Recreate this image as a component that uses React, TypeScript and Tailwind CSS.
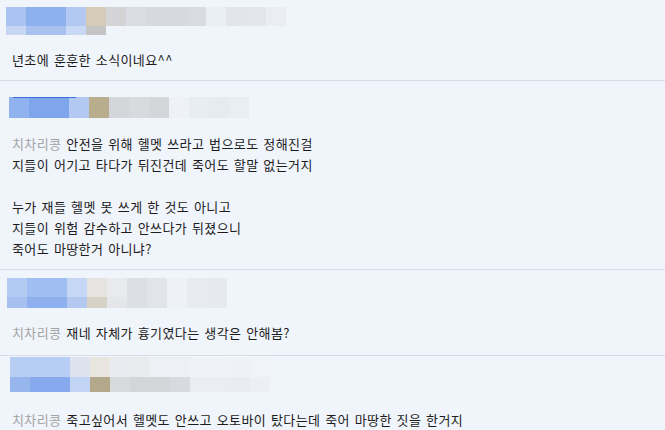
import React from "react";

type MosaicProps = {
  top: string[];
  bottom?: string[];
  topH: number;
  bottomH?: number;
  line?: boolean;
};

// pixelated (blurred-out) user name, drawn as coloured cells
const Mosaic = ({ top, bottom = [], topH, bottomH = 0, line }: MosaicProps) => {
  const w = top.length * 20;
  return (
    <svg width={w} height={topH + bottomH} className="block">
      {top.map((c, i) => (
        <rect key={"t" + i} x={i * 20} y={0} width={20} height={topH} fill={c} />
      ))}
      {bottom.map((c, i) => (
        <rect key={"b" + i} x={i * 20} y={topH} width={20} height={bottomH} fill={c} />
      ))}
      {line && <rect x={4} y={0} width={63} height={1} fill="#3a6fd8" />}
    </svg>
  );
};

const Name = () => <span className="text-[#a3a3a3]">치차리콩 </span>;

const App = () => {
  return (
    <div
      className="w-[665px] h-[430px] overflow-hidden bg-[#f0f4fb] text-[13px] leading-[21px] tracking-[0.4px] [word-spacing:1.5px] text-[#1c1c1c]"
      style={{ fontFamily: '"Noto Sans CJK KR", sans-serif' }}
    >
      <div className="pl-[6px] pr-3 pt-[7px] pb-[10px] border-b border-[#d9dee6]">
        <Mosaic
          topH={19}
          bottomH={9}
          top={["#a9c4f0", "#8eb0ee", "#8eb0ee", "#b4c9f2", "#d6cbb6", "#d4d4d6", "#dadde3", "#d6d9de", "#d6d9de", "#d8dbe0", "#eaeef5", "#e2e6ec", "#e3e7ed", "#eaedf4"]}
          bottom={["#c7d7f3", "#a8c2f0", "#a8c2f0", "#c9d8f5", "#c4c4c4"]}
        />
        <p className="mt-[14px] pl-[6px]">년초에 훈훈한 소식이네요^^</p>
      </div>

      <div className="pl-[9px] pt-[16px] pb-[10px] border-b border-[#d9dee6]">
        <Mosaic
          topH={21}
          line
          top={["#90b2ef", "#7fa5ec", "#7fa5ec", "#b4c9f2", "#b8ad8c", "#d4d6da", "#d8dade", "#d4d6da", "#eef2f8", "#e8ecf3", "#e6eaf1", "#e9edf4"]}
        />
        <div className="mt-[15px] pl-[3px]">
          <p><Name />안전을 위해 헬멧 쓰라고 법으로도 정해진걸</p>
          <p>지들이 어기고 타다가 뒤진건데 죽어도 할말 없는거지</p>
          <p>&nbsp;</p>
          <p>누가 재들 헬멧 못 쓰게 한 것도 아니고</p>
          <p>지들이 위험 감수하고 안쓰다가 뒤졌으니</p>
          <p>죽어도 마땅한거 아니냐?</p>
        </div>
      </div>

      <div className="pl-[7px] pt-[8px] pb-[12px] border-b border-[#d9dee6]">
        <Mosaic
          topH={19}
          bottomH={11}
          top={["#b2cbf2", "#9fbef2", "#9fbef2", "#c6d6f5", "#e5e4e0", "#e8eaee", "#dcdfe4", "#e1e4e9", "#eef2f8", "#e8ebf0", "#e6e9ee"]}
          bottom={["#a6c0f0", "#8eb0ee", "#8eb0ee", "#b4c9f2", "#d6d2c6", "#e4e6ea", "#dcdfe4", "#e1e4e9", "#eef2f8", "#e8ebf0", "#e6e9ee"]}
        />
        <p className="mt-[14px] pl-[5px]"><Name />재네 자체가 흉기였다는 생각은 안해봄?</p>
      </div>

      <div className="pl-[10px] pt-[1px]">
        <Mosaic
          topH={20}
          bottomH={15}
          top={["#b8cdf3", "#b8cdf3", "#b8cdf3", "#dde3ee", "#e8e6df", "#e9ebf0", "#e9ebef", "#edf0f5", "#edf0f5", "#eff2f7", "#eff2f7", "#eef1f6", "#f0f3f8"]}
          bottom={["#98b6ee", "#86aaed", "#86aaed", "#c2d4f4", "#b3a98a", "#d8dadd", "#d3d5d9", "#d4d6da", "#d8dadf", "#eaedf2", "#eaedf2", "#e9ecf1", "#eceff4"]}
        />
        <p className="mt-[17px] pl-[2px]"><Name />죽고싶어서 헬멧도 안쓰고 오토바이 탔다는데 죽어 마땅한 짓을 한거지</p>
      </div>
    </div>
  );
};

export default App;
